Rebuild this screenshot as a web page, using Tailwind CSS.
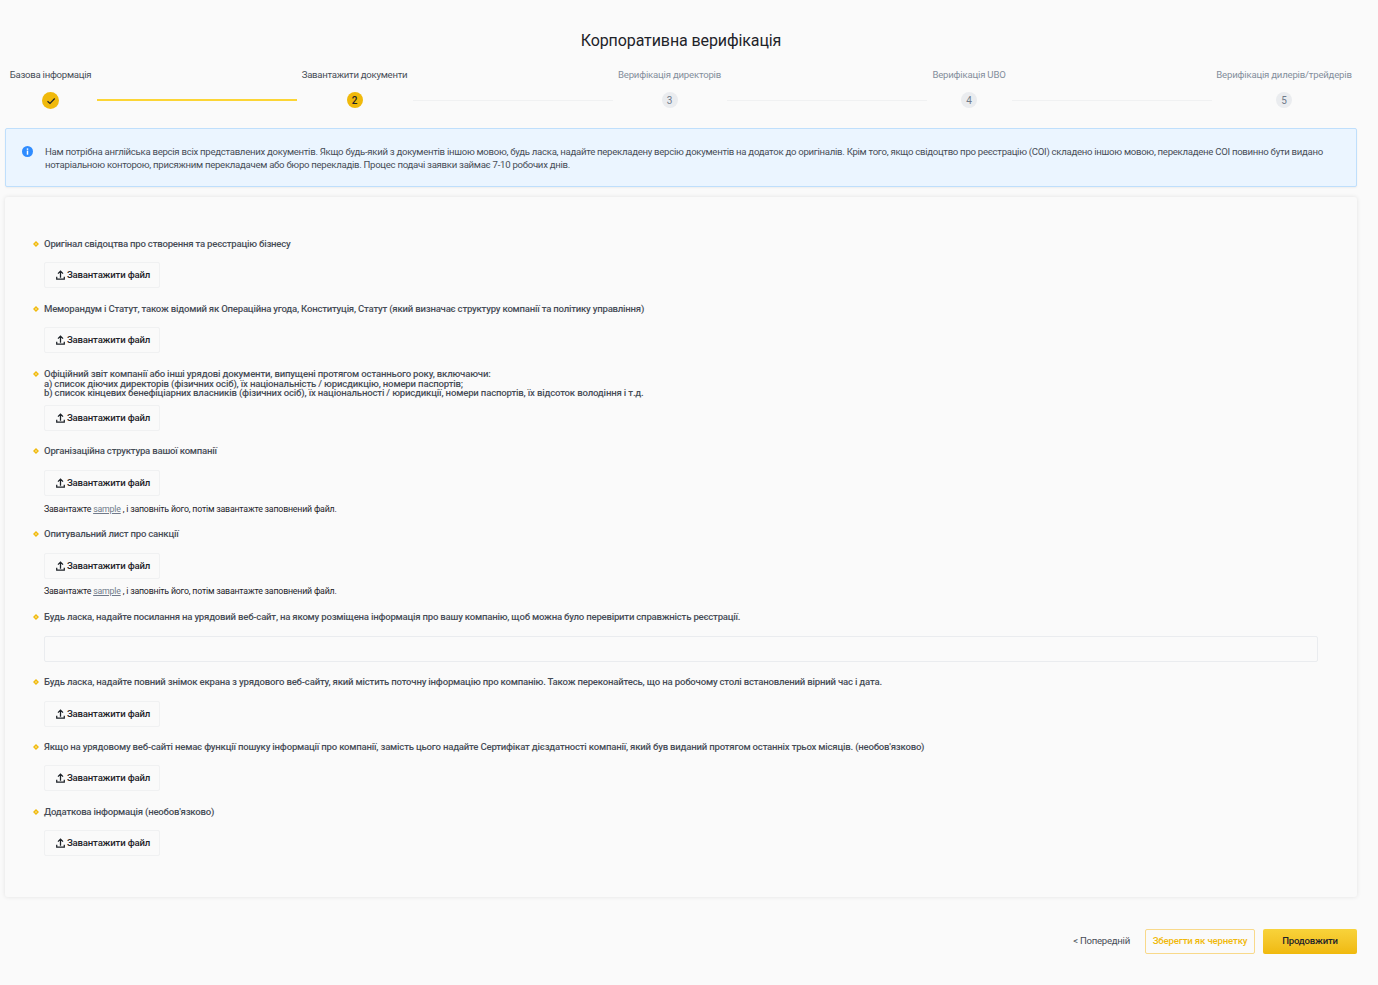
<!DOCTYPE html>
<html lang="uk">
<head>
<meta charset="utf-8">
<script src="https://cdn.jsdelivr.net/npm/@tailwindcss/browser@4"></script>
<title>Корпоративна верифікація</title>
</head>
<body class="bg-[#fafafa] font-['Roboto',sans-serif] text-[#474d57]">
<div class="w-[1378px] h-[985px] overflow-hidden flex flex-col pl-[5px] pr-[21px]">
  <h1 class="mt-[31px] text-center text-[16px] leading-[19px] font-normal tracking-[-0.1px] text-[#1e2329]">Корпоративна верифікація</h1>

  <div class="mt-[19px] flex items-start justify-between pl-[5px] pr-[6px]">
    <div class="flex flex-col items-center w-[81px]">
      <span class="text-[9.6px] leading-[12px] tracking-[-0.27px] whitespace-nowrap text-[#474d57]">Базова інформація</span>
      <span class="mt-[11px] w-[17px] h-[17px] rounded-full bg-[#f0b90b] flex items-center justify-center">
        <svg viewBox="0 0 10 10" class="w-[10px] h-[10px]" fill="none" stroke="#1e2329" stroke-width="1.2"><path d="M1.5 5.2 4 7.5 8.7 2.5"/></svg>
      </span>
    </div>
    <div class="mt-[30px] w-[200px] h-[2px] bg-[#fcd535]"></div>
    <div class="flex flex-col items-center w-[105px]">
      <span class="text-[9.6px] leading-[12px] tracking-[-0.27px] whitespace-nowrap text-[#474d57]">Завантажити документи</span>
      <span class="mt-[11px] w-4 h-4 rounded-full bg-[#f0b90b] flex items-center justify-center text-[10px] font-medium text-[#1e2329]">2</span>
    </div>
    <div class="mt-[31px] w-[200px] h-[1px] bg-[#f0f1f2]"></div>
    <div class="flex flex-col items-center w-[103px]">
      <span class="text-[9.6px] leading-[12px] tracking-[-0.2px] whitespace-nowrap text-[#848e9c]">Верифікація директорів</span>
      <span class="mt-[11px] w-4 h-4 rounded-full bg-[#eaecef] flex items-center justify-center text-[10px] text-[#707a8a]">3</span>
    </div>
    <div class="mt-[31px] w-[200px] h-[1px] bg-[#f0f1f2]"></div>
    <div class="flex flex-col items-center w-[74px]">
      <span class="text-[9.6px] leading-[12px] tracking-[-0.2px] whitespace-nowrap text-[#848e9c]">Верифікація UBO</span>
      <span class="mt-[11px] w-4 h-4 rounded-full bg-[#eaecef] flex items-center justify-center text-[10px] text-[#707a8a]">4</span>
    </div>
    <div class="mt-[31px] w-[200px] h-[1px] bg-[#f0f1f2]"></div>
    <div class="flex flex-col items-center w-[134px]">
      <span class="text-[9.6px] leading-[12px] tracking-[-0.2px] whitespace-nowrap text-[#848e9c]">Верифікація дилерів/трейдерів</span>
      <span class="mt-[11px] w-4 h-4 rounded-full bg-[#eaecef] flex items-center justify-center text-[10px] text-[#707a8a]">5</span>
    </div>
  </div>

  <div class="mt-[19px] h-[59px] rounded-[2px] border border-[#bfdffc] bg-[#ebf5ff] flex items-center pl-[16px] pr-[16px] shadow-[0_1px_2px_rgba(0,0,0,0.05)]">
    <svg viewBox="0 0 12 12" class="w-[11px] h-[11px] shrink-0 -mt-[12px]"><circle cx="6" cy="6" r="6" fill="#2f8cff"/><rect x="5.2" y="5" width="1.6" height="4.5" fill="#fff"/><rect x="5.2" y="2.6" width="1.6" height="1.6" fill="#fff"/></svg>
    <p class="ml-[12px] text-[9.6px] leading-[13px] tracking-[-0.28px] text-[#474d57]">Нам потрібна англійська версія всіх представлених документів. Якщо будь-який з документів іншою мовою, будь ласка, надайте перекладену версію документів на додаток до оригіналів. Крім того, якщо свідоцтво про реєстрацію (COI) складено іншою мовою, перекладене COI повинно бути видано нотаріальною конторою, присяжним перекладачем або бюро перекладів. Процес подачі заявки займає 7-10 робочих днів.</p>
  </div>

  <div class="mt-[10px] h-[700px] rounded-[3px] bg-[#fafafa] shadow-[0_0_4px_rgba(0,0,0,0.1)] pl-[29px] pr-[39px] pt-[42px] tracking-[-0.22px]">
    <div class="flex items-center gap-[5px] h-[10px] text-[9.6px] font-medium">
      <svg viewBox="0 0 6 6" class="w-[6px] h-[6px] -ml-[1px] shrink-0"><path d="M3 1 5 3 3 5 1 3Z" fill="#fce9a6" stroke="#f0b90b" stroke-width="1.4"/></svg>
      <span>Оригінал свідоцтва про створення та реєстрацію бізнесу</span>
    </div>
    <button class="mt-[13px] ml-[10px] pl-[2px] flex items-center justify-center w-[116px] h-[26px] rounded-[2px] border border-[#f0f1f2] text-[9.6px] font-medium tracking-[-0.18px] text-[#1e2329]"><svg viewBox="0 0 10 11" class="w-[9px] h-[10px] mr-[2px] shrink-0" fill="none" stroke="#1e2329" stroke-width="1.4"><path d="M5 8.5V1.2M2.2 4 5 1.2 7.8 4M.8 7.5v2.7h8.4V7.5"/></svg>Завантажити файл</button>

    <div class="mt-[16px] flex items-center gap-[5px] h-[10px] text-[9.6px] font-medium">
      <svg viewBox="0 0 6 6" class="w-[6px] h-[6px] -ml-[1px] shrink-0"><path d="M3 1 5 3 3 5 1 3Z" fill="#fce9a6" stroke="#f0b90b" stroke-width="1.4"/></svg>
      <span>Меморандум і Статут, також відомий як Операційна угода, Конституція, Статут (який визначає структуру компанії та політику управління)</span>
    </div>
    <button class="mt-[13px] ml-[10px] pl-[2px] flex items-center justify-center w-[116px] h-[26px] rounded-[2px] border border-[#f0f1f2] text-[9.6px] font-medium tracking-[-0.18px] text-[#1e2329]"><svg viewBox="0 0 10 11" class="w-[9px] h-[10px] mr-[2px] shrink-0" fill="none" stroke="#1e2329" stroke-width="1.4"><path d="M5 8.5V1.2M2.2 4 5 1.2 7.8 4M.8 7.5v2.7h8.4V7.5"/></svg>Завантажити файл</button>

    <div class="mt-[16px] flex items-start gap-[5px] text-[9.6px] leading-[9.6px] font-medium">
      <svg viewBox="0 0 6 6" class="w-[6px] h-[6px] -ml-[1px] shrink-0 mt-[2px]"><path d="M3 1 5 3 3 5 1 3Z" fill="#fce9a6" stroke="#f0b90b" stroke-width="1.4"/></svg>
      <span class="tracking-[-0.18px]">Офіційний звіт компанії або інші урядові документи, випущені протягом останнього року, включаючи:<br>a) список діючих директорів (фізичних осіб), їх національність / юрисдикцію, номери паспортів;<br>b) список кінцевих бенефіціарних власників (фізичних осіб), їх національності / юрисдикції, номери паспортів, їх відсоток володіння і т.д.</span>
    </div>
    <button class="mt-[7px] ml-[10px] pl-[2px] flex items-center justify-center w-[116px] h-[26px] rounded-[2px] border border-[#f0f1f2] text-[9.6px] font-medium tracking-[-0.18px] text-[#1e2329]"><svg viewBox="0 0 10 11" class="w-[9px] h-[10px] mr-[2px] shrink-0" fill="none" stroke="#1e2329" stroke-width="1.4"><path d="M5 8.5V1.2M2.2 4 5 1.2 7.8 4M.8 7.5v2.7h8.4V7.5"/></svg>Завантажити файл</button>

    <div class="mt-[15px] flex items-center gap-[5px] h-[10px] text-[9.6px] font-medium">
      <svg viewBox="0 0 6 6" class="w-[6px] h-[6px] -ml-[1px] shrink-0"><path d="M3 1 5 3 3 5 1 3Z" fill="#fce9a6" stroke="#f0b90b" stroke-width="1.4"/></svg>
      <span>Організаційна структура вашої компанії</span>
    </div>
    <button class="mt-[14px] ml-[10px] pl-[2px] flex items-center justify-center w-[116px] h-[26px] rounded-[2px] border border-[#f0f1f2] text-[9.6px] font-medium tracking-[-0.18px] text-[#1e2329]"><svg viewBox="0 0 10 11" class="w-[9px] h-[10px] mr-[2px] shrink-0" fill="none" stroke="#1e2329" stroke-width="1.4"><path d="M5 8.5V1.2M2.2 4 5 1.2 7.8 4M.8 7.5v2.7h8.4V7.5"/></svg>Завантажити файл</button>
    <p class="mt-[8px] ml-[10px] h-[10px] text-[8.8px] leading-[10px] tracking-[-0.2px] text-[#1e2329]">Завантажте <span class="underline text-[#707a8a]">sample</span> , і заповніть його, потім завантажте заповнений файл.</p>

    <div class="mt-[15px] flex items-center gap-[5px] h-[10px] text-[9.6px] font-medium">
      <svg viewBox="0 0 6 6" class="w-[6px] h-[6px] -ml-[1px] shrink-0"><path d="M3 1 5 3 3 5 1 3Z" fill="#fce9a6" stroke="#f0b90b" stroke-width="1.4"/></svg>
      <span>Опитувальний лист про санкції</span>
    </div>
    <button class="mt-[14px] ml-[10px] pl-[2px] flex items-center justify-center w-[116px] h-[26px] rounded-[2px] border border-[#f0f1f2] text-[9.6px] font-medium tracking-[-0.18px] text-[#1e2329]"><svg viewBox="0 0 10 11" class="w-[9px] h-[10px] mr-[2px] shrink-0" fill="none" stroke="#1e2329" stroke-width="1.4"><path d="M5 8.5V1.2M2.2 4 5 1.2 7.8 4M.8 7.5v2.7h8.4V7.5"/></svg>Завантажити файл</button>
    <p class="mt-[7px] ml-[10px] h-[10px] text-[8.8px] leading-[10px] tracking-[-0.2px] text-[#1e2329]">Завантажте <span class="underline text-[#707a8a]">sample</span> , і заповніть його, потім завантажте заповнений файл.</p>

    <div class="mt-[16px] flex items-center gap-[5px] h-[10px] text-[9.6px] font-medium">
      <svg viewBox="0 0 6 6" class="w-[6px] h-[6px] -ml-[1px] shrink-0"><path d="M3 1 5 3 3 5 1 3Z" fill="#fce9a6" stroke="#f0b90b" stroke-width="1.4"/></svg>
      <span>Будь ласка, надайте посилання на урядовий веб-сайт, на якому розміщена інформація про вашу компанію, щоб можна було перевірити справжність реєстрації.</span>
    </div>
    <div class="mt-[14px] ml-[10px] h-[26px] rounded-[2px] border border-[#eaecef]"></div>

    <div class="mt-[15px] flex items-center gap-[5px] h-[10px] text-[9.6px] font-medium">
      <svg viewBox="0 0 6 6" class="w-[6px] h-[6px] -ml-[1px] shrink-0"><path d="M3 1 5 3 3 5 1 3Z" fill="#fce9a6" stroke="#f0b90b" stroke-width="1.4"/></svg>
      <span class="tracking-[-0.2px]">Будь ласка, надайте повний знімок екрана з урядового веб-сайту, який містить поточну інформацію про компанію. Також переконайтесь, що на робочому столі встановлений вірний час і дата.</span>
    </div>
    <button class="mt-[14px] ml-[10px] pl-[2px] flex items-center justify-center w-[116px] h-[26px] rounded-[2px] border border-[#f0f1f2] text-[9.6px] font-medium tracking-[-0.18px] text-[#1e2329]"><svg viewBox="0 0 10 11" class="w-[9px] h-[10px] mr-[2px] shrink-0" fill="none" stroke="#1e2329" stroke-width="1.4"><path d="M5 8.5V1.2M2.2 4 5 1.2 7.8 4M.8 7.5v2.7h8.4V7.5"/></svg>Завантажити файл</button>

    <div class="mt-[15px] flex items-center gap-[5px] h-[10px] text-[9.6px] font-medium">
      <svg viewBox="0 0 6 6" class="w-[6px] h-[6px] -ml-[1px] shrink-0"><path d="M3 1 5 3 3 5 1 3Z" fill="#fce9a6" stroke="#f0b90b" stroke-width="1.4"/></svg>
      <span class="tracking-[-0.21px]">Якщо на урядовому веб-сайті немає функції пошуку інформації про компанії, замість цього надайте Сертифікат дієздатності компанії, який був виданий протягом останніх трьох місяців. (необов'язково)</span>
    </div>
    <button class="mt-[13.5px] ml-[10px] pl-[2px] flex items-center justify-center w-[116px] h-[26px] rounded-[2px] border border-[#f0f1f2] text-[9.6px] font-medium tracking-[-0.18px] text-[#1e2329]"><svg viewBox="0 0 10 11" class="w-[9px] h-[10px] mr-[2px] shrink-0" fill="none" stroke="#1e2329" stroke-width="1.4"><path d="M5 8.5V1.2M2.2 4 5 1.2 7.8 4M.8 7.5v2.7h8.4V7.5"/></svg>Завантажити файл</button>

    <div class="mt-[15.5px] flex items-center gap-[5px] h-[10px] text-[9.6px] font-medium">
      <svg viewBox="0 0 6 6" class="w-[6px] h-[6px] -ml-[1px] shrink-0"><path d="M3 1 5 3 3 5 1 3Z" fill="#fce9a6" stroke="#f0b90b" stroke-width="1.4"/></svg>
      <span>Додаткова інформація (необов'язково)</span>
    </div>
    <button class="mt-[13px] ml-[10px] pl-[2px] flex items-center justify-center w-[116px] h-[26px] rounded-[2px] border border-[#f0f1f2] text-[9.6px] font-medium tracking-[-0.18px] text-[#1e2329]"><svg viewBox="0 0 10 11" class="w-[9px] h-[10px] mr-[2px] shrink-0" fill="none" stroke="#1e2329" stroke-width="1.4"><path d="M5 8.5V1.2M2.2 4 5 1.2 7.8 4M.8 7.5v2.7h8.4V7.5"/></svg>Завантажити файл</button>
  </div>

  <div class="mt-[32px] flex items-center justify-end">
    <span class="text-[9.6px] tracking-[-0.25px] text-[#474d57]">&lt; Попередній</span>
    <button class="ml-[15px] w-[110px] h-[25px] rounded-[2px] border-[1.5px] border-[#f8d98a] text-[9.6px] font-medium tracking-[-0.15px] text-[#f0b90b]">Зберегти як чернетку</button>
    <button class="ml-[8px] w-[94px] h-[25px] rounded-[2px] bg-gradient-to-b from-[#f8d33a] to-[#f0b90b] text-[9.6px] font-medium tracking-[-0.2px] text-[#1e2329]">Продовжити</button>
  </div>
</div>
</body>
</html>
